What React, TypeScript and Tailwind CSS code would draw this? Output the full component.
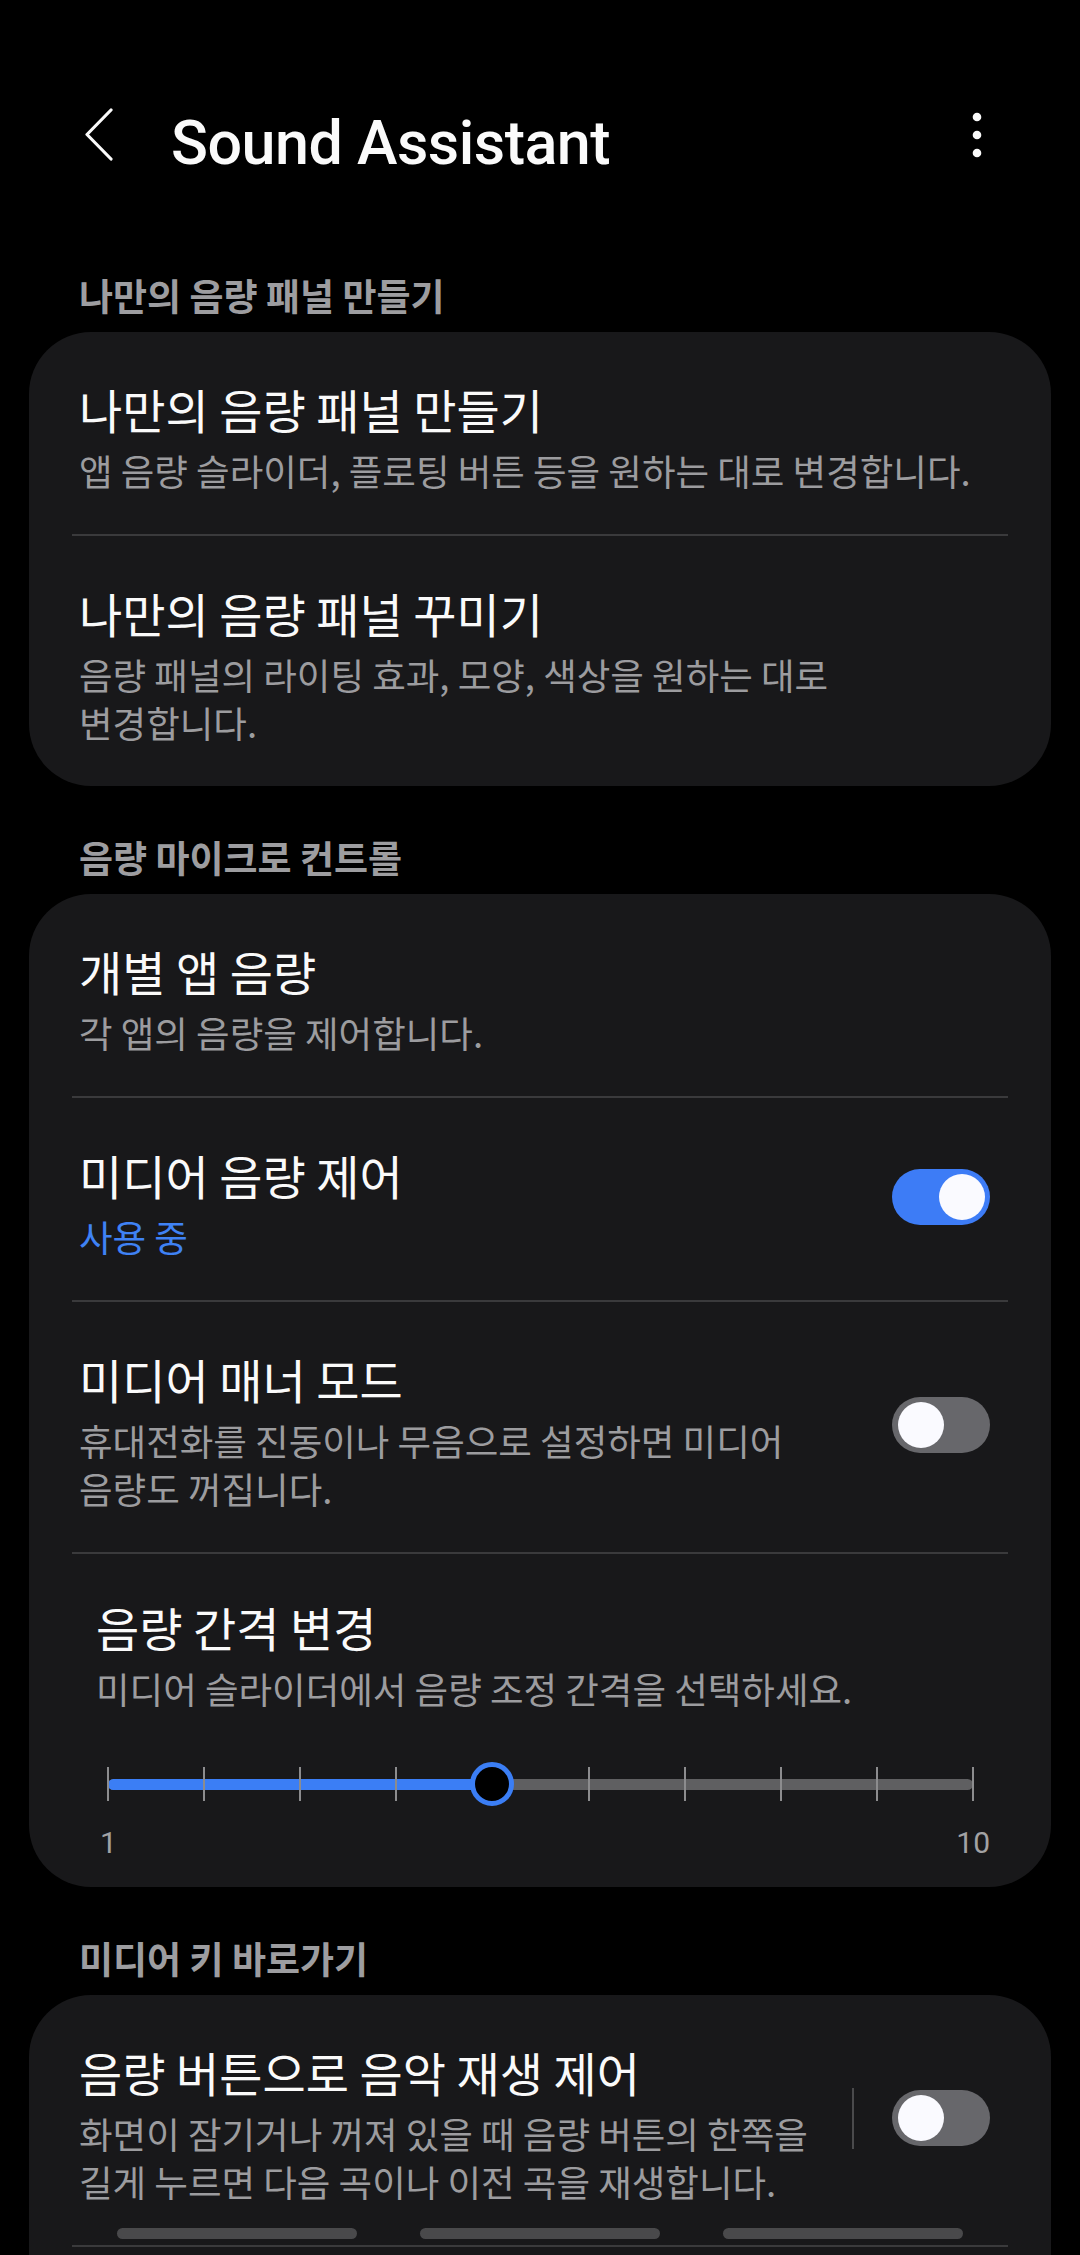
import React from "react";

function Toggle({ on }: { on: boolean }) {
  return (
    <div
      className={
        on
          ? "relative w-[98px] h-[56px] shrink-0 rounded-full bg-[#3d7cf6]"
          : "relative w-[98px] h-[56px] shrink-0 rounded-full bg-[#67676b]"
      }
    >
      <div
        className={
          on
            ? "absolute top-[5px] right-[5px] w-[46px] h-[46px] rounded-full bg-[#fafaff]"
            : "absolute top-[5px] left-[6px] w-[46px] h-[46px] rounded-full bg-[#fafaff]"
        }
      />
    </div>
  );
}

function SectionHeader({ children }: { children: React.ReactNode }) {
  return (
    <div className="pt-[49px] pb-[15px] px-[79px] text-[37px] leading-[44px] font-bold text-[#9d9da0] whitespace-nowrap">
      {children}
    </div>
  );
}

function Card({ children }: { children: React.ReactNode }) {
  return (
    <div className="mx-[29px] rounded-[62px] bg-[#18181a] overflow-hidden">
      {children}
    </div>
  );
}

function Divider() {
  return <div className="mx-[43px] h-[2px] bg-[#3a3a3c]" />;
}

function Title({ children }: { children: React.ReactNode }) {
  return (
    <div className="text-[47px] leading-[60px] text-[#fafafa] whitespace-nowrap">
      {children}
    </div>
  );
}

function Sub({
  children,
  blue,
}: {
  children: React.ReactNode;
  blue?: boolean;
}) {
  return (
    <div
      className={
        blue
          ? "mt-[8px] text-[36.5px] leading-[48px] text-[#3f82f5] whitespace-nowrap"
          : "mt-[8px] text-[36.5px] leading-[48px] text-[#9c9c9f] whitespace-nowrap"
      }
    >
      {children}
    </div>
  );
}

function Item({
  title,
  sub,
  blue,
  right,
}: {
  title: string;
  sub: React.ReactNode;
  blue?: boolean;
  right?: React.ReactNode;
}) {
  return (
    <div className="flex items-center pl-[50px] pr-[61px] pt-[47px] pb-[39px]">
      <div className="flex-1 min-w-0">
        <Title>{title}</Title>
        <Sub blue={blue}>{sub}</Sub>
      </div>
      {right && <div className="mb-[12px]">{right}</div>}
    </div>
  );
}

function StepSlider({ value, steps }: { value: number; steps: number }) {
  const pct = ((value - 1) / (steps - 1)) * 100;
  return (
    <div className="ml-[12px] mr-[11px] mt-[49px]">
      <div className="relative h-[44px] flex items-center">
        <div className="w-full h-[11px] rounded-full bg-[#5f5f61]" />
        <div
          className="absolute left-0 top-[16.5px] h-[11px] rounded-full bg-[#3b7ef5]"
          style={{ width: `${pct}%` }}
        />
        <div className="absolute inset-0 flex justify-between items-center -mx-[1px]">
          {Array.from({ length: steps }).map((_, i) => (
            <div key={i} className="w-[2px] h-[34px] bg-[#8c8c8e]" />
          ))}
        </div>
        <div
          className="absolute top-0 -translate-x-1/2 w-[44px] h-[44px] rounded-full border-[5px] border-[#3b7ef5] bg-black"
          style={{ left: `${pct}%` }}
        />
      </div>
      <div className="flex justify-between -ml-[8px] -mr-[17px] mt-[17px] font-['Roboto',sans-serif] text-[30px] leading-[40px] text-[#a2a2a4]">
        <span>1</span>
        <span>10</span>
      </div>
    </div>
  );
}

export default function App() {
  return (
    <div className="relative w-[1080px] h-[2255px] overflow-hidden bg-black font-['Noto_Sans_CJK_KR',sans-serif]">
      <header className="h-[224px] pt-[108px]">
        <div className="flex items-center h-[70px] pl-[84px]">
          <svg width="30" height="54" viewBox="0 0 30 54" className="mb-[17px]">
            <path
              d="M27 2 L3 26.5 L27 51"
              fill="none"
              stroke="#fafafa"
              strokeWidth="3.2"
              strokeLinecap="round"
              strokeLinejoin="round"
            />
          </svg>
          <h1 className="ml-[57px] font-['Roboto',sans-serif] font-medium text-[61px] leading-[70px] text-[#fafafa] tracking-[-0.5px]">
            Sound Assistant
          </h1>
          <svg width="10" height="46" viewBox="0 0 10 46" className="ml-auto mr-[98px] mb-[17px]">
            <circle cx="5" cy="5" r="4.3" fill="#fafafa" />
            <circle cx="5" cy="23" r="4.3" fill="#fafafa" />
            <circle cx="5" cy="41" r="4.3" fill="#fafafa" />
          </svg>
        </div>
      </header>

      <SectionHeader>나만의 음량 패널 만들기</SectionHeader>
      <Card>
        <Item
          title="나만의 음량 패널 만들기"
          sub="앱 음량 슬라이더, 플로팅 버튼 등을 원하는 대로 변경합니다."
        />
        <Divider />
        <Item
          title="나만의 음량 패널 꾸미기"
          sub={
            <>
              음량 패널의 라이팅 효과, 모양, 색상을 원하는 대로
              <br />
              변경합니다.
            </>
          }
        />
      </Card>

      <SectionHeader>음량 마이크로 컨트롤</SectionHeader>
      <Card>
        <Item title="개별 앱 음량" sub="각 앱의 음량을 제어합니다." />
        <Divider />
        <Item
          title="미디어 음량 제어"
          sub="사용 중"
          blue
          right={<Toggle on />}
        />
        <Divider />
        <Item
          title="미디어 매너 모드"
          sub={
            <>
              휴대전화를 진동이나 무음으로 설정하면 미디어
              <br />
              음량도 꺼집니다.
            </>
          }
          right={<Toggle on={false} />}
        />
        <Divider />
        <div className="px-[67px] pt-[43px] pb-[24px]">
          <Title>음량 간격 변경</Title>
          <Sub>미디어 슬라이더에서 음량 조정 간격을 선택하세요.</Sub>
          <StepSlider value={5} steps={10} />
        </div>
      </Card>

      <SectionHeader>미디어 키 바로가기</SectionHeader>
      <Card>
        <Item
          title="음량 버튼으로 음악 재생 제어"
          sub={
            <>
              화면이 잠기거나 꺼져 있을 때 음량 버튼의 한쪽을
              <br />
              길게 누르면 다음 곡이나 이전 곡을 재생합니다.
            </>
          }
          right={
            <div className="flex items-center">
              <div className="w-[2px] h-[61px] bg-[#4a4a4c] mr-[38px]" />
              <Toggle on={false} />
            </div>
          }
        />
        <Divider />
        <div className="h-[200px]" />
      </Card>

      <div className="absolute bottom-[16px] left-0 right-0 flex justify-center gap-[63px]">
        <div className="w-[240px] h-[11px] rounded-full bg-[#49494b]" />
        <div className="w-[240px] h-[11px] rounded-full bg-[#49494b]" />
        <div className="w-[240px] h-[11px] rounded-full bg-[#49494b]" />
      </div>
    </div>
  );
}
